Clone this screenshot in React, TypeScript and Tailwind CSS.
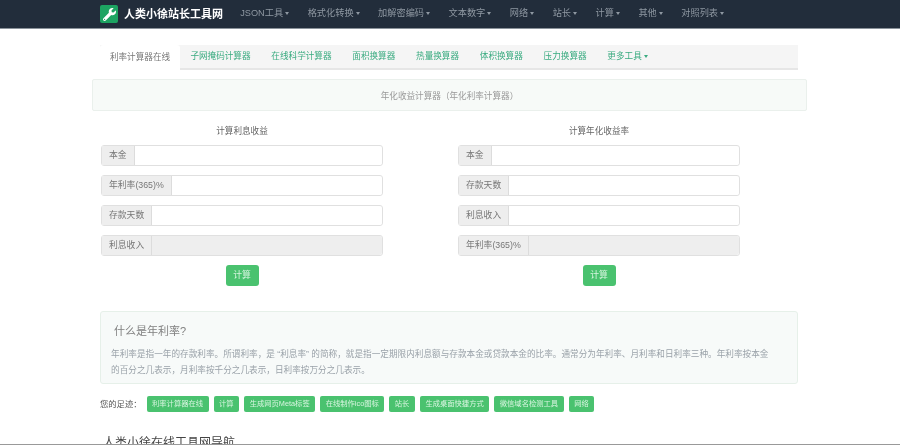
import { FaWrench } from 'react-icons/fa';

const navItems = ['JSON工具', '格式化转换', '加解密编码', '文本数字', '网络', '站长', '计算', '其他', '对照列表'];
const tabs = ['子网掩码计算器', '在线科学计算器', '面积换算器', '热量换算器', '体积换算器', '压力换算器'];
const trail = ['利率计算器在线', '计算', '生成网页Meta标签', '在线制作ico图标', '站长', '生成桌面快捷方式', '微信域名检测工具', '网络'];

function Caret({ className }: { className: string }) {
  return <span className={`ml-[2px] inline-block border-x-[2.5px] border-t-[3px] border-x-transparent align-middle ${className}`} />;
}

function Field({ label, disabled }: { label: string; disabled?: boolean }) {
  return (
    <div className="flex h-[21px] rounded-[3px] border border-[#e0e0e0] shadow-[inset_0_1px_1px_rgba(0,0,0,0.05)]">
      <span className="flex items-center border-r border-[#dcdcdc] bg-[#eeeeee] px-[7px] text-[8.8px] text-[#777]">{label}</span>
      <div className={`flex-1 rounded-r-[3px] ${disabled ? 'bg-[#eeeeee]' : 'bg-white'}`} />
    </div>
  );
}

function Calc({ title, fields }: { title: string; fields: string[] }) {
  return (
    <div className="w-[282px]">
      <h3 className="mb-[7px] h-[16px] pt-[1px] text-center text-[8.6px] leading-[16px] text-[#666]">{title}</h3>
      <div className="flex flex-col gap-[9px]">
        {fields.map((f, i) => (
          <Field key={f} label={f} disabled={i === fields.length - 1} />
        ))}
      </div>
      <div className="mt-[9px] flex justify-center">
        <button className="h-[21px] w-[33px] rounded-[3px] bg-[#4ac26f] text-[8.8px] text-[#d8f5e0]">计算</button>
      </div>
    </div>
  );
}

export default function App() {
  return (
    <div className="relative h-[445px] w-[900px] overflow-hidden bg-white blur-[0.3px] font-['Liberation_Sans','Noto_Sans_CJK_SC',sans-serif]">
      <nav className="flex h-[29px] items-center border-b border-[#8a929a] bg-[#222d3b] pl-[100px]">
        <div className="flex h-[18px] w-[18px] items-center justify-center rounded-[2px] bg-[#1da462]">
          <FaWrench className="text-[13px] text-white" />
        </div>
        <span className="ml-[6px] w-[107px] text-[11px] font-bold text-white">人类小徐站长工具网</span>
        <div className="flex">
          {navItems.map((item) => (
            <a key={item} className="whitespace-nowrap px-[9.25px] text-[9.2px] text-[#8f98a2]">
              {item}
              <Caret className="border-t-[#8f98a2]" />
            </a>
          ))}
        </div>
      </nav>

      <main className="ml-[92px] w-[715px]">
        <div className="mx-[8px] mt-[16px] flex h-[25px] w-[698px] border-b-2 border-[#e6e6e6] bg-[#f5f5f5]">
          <span className="flex h-[25px] w-[80px] items-center justify-center rounded-t-[3px] bg-white text-[8.6px] text-[#777]">利率计算器在线</span>
          {tabs.map((t) => (
            <a key={t} className="flex items-center whitespace-nowrap px-[10.4px] text-[8.6px] text-[#3aab80]">{t}</a>
          ))}
          <a className="flex items-center whitespace-nowrap px-[10.4px] text-[8.6px] text-[#3aab80]">
            更多工具
            <Caret className="border-t-[#3aab80]" />
          </a>
        </div>

        <div className="mt-[9px] flex h-[32px] items-center justify-center rounded-[2px] border border-[#eaf0ec] bg-[#f7faf8] pt-[3px] text-[8.6px] text-[#999]">
          年化收益计算器（年化利率计算器）
        </div>

        <div className="mx-[9px] mt-[11px] flex gap-[75px]">
          <Calc title="计算利息收益" fields={['本金', '年利率(365)%', '存款天数', '利息收入']} />
          <Calc title="计算年化收益率" fields={['本金', '存款天数', '利息收入', '年利率(365)%']} />
        </div>

        <section className="mx-[8px] mt-[25px] h-[73px] w-[698px] rounded-[3px] border border-[#e6f0e9] bg-[#f7faf9] pl-[10px] pr-[20px] pt-[10px]">
          <h4 className="pl-[3px] text-[11px] leading-[18px] text-[#808080]">什么是年利率?</h4>
          <p className="mt-[6px] text-[8.65px] leading-[16px] text-[#9aa2a9]">
            年利率是指一年的存款利率。所谓利率，是 “利息率” 的简称，就是指一定期限内利息额与存款本金或贷款本金的比率。通常分为年利率、月利率和日利率三种。年利率按本金的百分之几表示，月利率按千分之几表示，日利率按万分之几表示。
          </p>
        </section>

        <div className="ml-[8px] mt-[12px] flex h-[16px] items-center gap-[5px]">
          <span className="whitespace-nowrap text-[8.3px] text-[#555]">您的足迹：</span>
          {trail.map((t, i) => (
            <span key={i} className="flex h-[16px] items-center whitespace-nowrap rounded-[2px] bg-[#4ac26f] px-[5.5px] text-[7.3px] text-[#d8f5e0]">{t}</span>
          ))}
        </div>

        <h2 className="ml-[11px] mt-[22px] text-[12px] leading-[18px] text-[#444]">人类小徐在线工具网导航</h2>
      </main>

      <div className="absolute bottom-0 left-0 h-[1px] w-full bg-[#999]" />
    </div>
  );
}
